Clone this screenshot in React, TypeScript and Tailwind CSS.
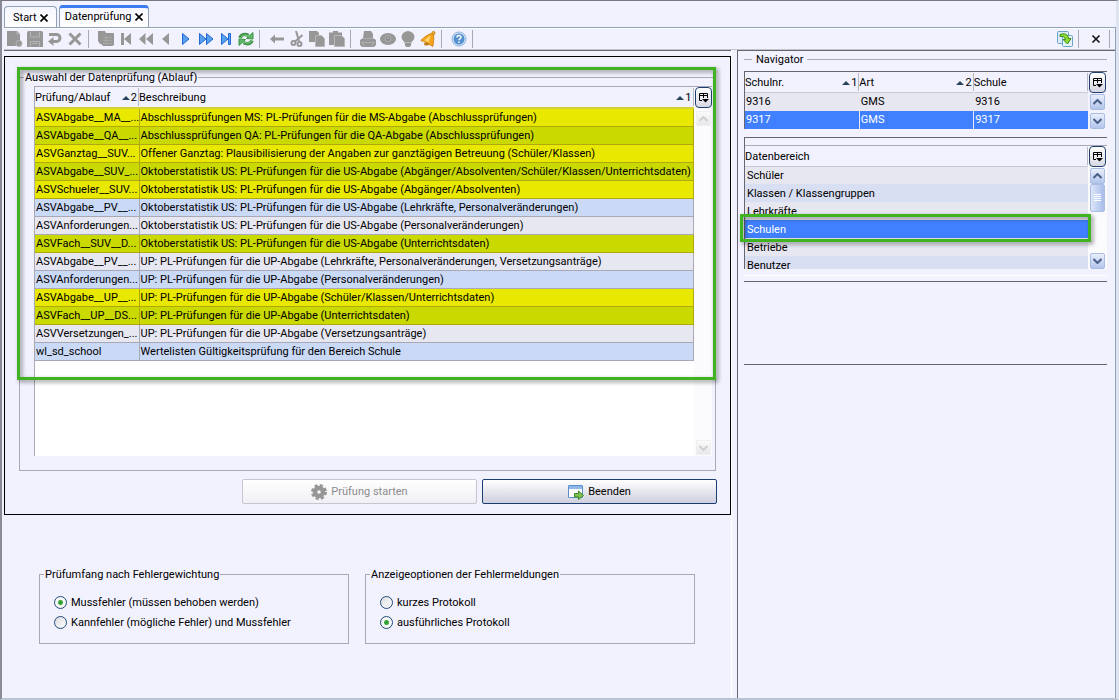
import { useState } from 'react';
import type { ReactNode } from 'react';
import clsx from 'clsx';

type RowTone = 'yellow' | 'olive' | 'light' | 'blue';

interface CheckRow {
  name: string;
  description: string;
  tone: RowTone;
}

const CHECKS: CheckRow[] = [
  { name: 'ASVAbgabe__MA__...', description: 'Abschlussprüfungen MS: PL-Prüfungen für die MS-Abgabe (Abschlussprüfungen)', tone: 'yellow' },
  { name: 'ASVAbgabe__QA__...', description: 'Abschlussprüfungen QA: PL-Prüfungen für die QA-Abgabe (Abschlussprüfungen)', tone: 'olive' },
  { name: 'ASVGanztag__SUV...', description: 'Offener Ganztag: Plausibilisierung der Angaben zur ganztägigen Betreuung (Schüler/Klassen)', tone: 'yellow' },
  { name: 'ASVAbgabe__SUV_...', description: 'Oktoberstatistik US: PL-Prüfungen für die US-Abgabe (Abgänger/Absolventen/Schüler/Klassen/Unterrichtsdaten)', tone: 'olive' },
  { name: 'ASVSchueler__SUV...', description: 'Oktoberstatistik US: PL-Prüfungen für die US-Abgabe (Abgänger/Absolventen)', tone: 'yellow' },
  { name: 'ASVAbgabe__PV__...', description: 'Oktoberstatistik US: PL-Prüfungen für die US-Abgabe (Lehrkräfte, Personalveränderungen)', tone: 'blue' },
  { name: 'ASVAnforderungen...', description: 'Oktoberstatistik US: PL-Prüfungen für die US-Abgabe (Personalveränderungen)', tone: 'light' },
  { name: 'ASVFach__SUV__D...', description: 'Oktoberstatistik US: PL-Prüfungen für die US-Abgabe (Unterrichtsdaten)', tone: 'olive' },
  { name: 'ASVAbgabe__PV__...', description: 'UP: PL-Prüfungen für die UP-Abgabe (Lehrkräfte, Personalveränderungen, Versetzungsanträge)', tone: 'light' },
  { name: 'ASVAnforderungen...', description: 'UP: PL-Prüfungen für die UP-Abgabe (Personalveränderungen)', tone: 'blue' },
  { name: 'ASVAbgabe__UP__...', description: 'UP: PL-Prüfungen für die UP-Abgabe (Schüler/Klassen/Unterrichtsdaten)', tone: 'yellow' },
  { name: 'ASVFach__UP__DS...', description: 'UP: PL-Prüfungen für die UP-Abgabe (Unterrichtsdaten)', tone: 'olive' },
  { name: 'ASVVersetzungen_...', description: 'UP: PL-Prüfungen für die UP-Abgabe (Versetzungsanträge)', tone: 'light' },
  { name: 'wl_sd_school', description: 'Wertelisten Gültigkeitsprüfung für den Bereich Schule', tone: 'blue' },
];

const TONES: Record<RowTone, string> = {
  yellow: 'bg-[#e8e800] border-[#b0a80c]',
  olive: 'bg-[#cad900] border-[#b0a80c]',
  light: 'bg-[#e7e7f1] border-[#a8a8b6]',
  blue: 'bg-[#cad9f6] border-[#a8a8b6]',
};

const SCHOOLS = [
  { number: '9316', kind: 'GMS', school: '9316' },
  { number: '9317', kind: 'GMS', school: '9317' },
];

const AREAS = ['Schüler', 'Klassen / Klassengruppen', 'Lehrkräfte', 'Schulen', 'Betriebe', 'Benutzer'];

function Icon({ children }: { children: ReactNode }) {
  return (
    <svg className="h-4 w-4 shrink-0" viewBox="0 0 16 16" fill="none" aria-hidden="true">
      {children}
    </svg>
  );
}

function ToolButton({ label, disabled, children }: { label: string; disabled?: boolean; children: ReactNode }) {
  return (
    <button type="button" aria-label={label} disabled={disabled} className="flex h-5 w-5 items-center justify-center">
      <Icon>{children}</Icon>
    </button>
  );
}

function Separator() {
  return <span className="ml-[3px] mr-[7px] h-[18px] w-px bg-[#a9a9b4]" />;
}

const GRAY = '#979797';

function Toolbar() {
  return (
    <div role="toolbar" className="flex h-[22px] items-center border-b border-[#c4c4cc] border-t border-t-white pl-px">
      <ToolButton label="Neu" disabled>
        <path d="M0 0h10l3 3v12H0z" fill={GRAY} />
        <path d="M10 0v3h3" stroke="#b8b8b8" />
        <circle cx="12" cy="12.500" r="3" fill={GRAY} stroke="#b5b5b5" />
      </ToolButton>
      <ToolButton label="Speichern" disabled>
        <path d="M0 1.500L1 0h14l1 1.500V16H0z" fill={GRAY} />
        <path d="M3.500.500v5.500h9V.500M3.500 15.500v-5h9v5M5 12.500h6" stroke="#b5b5b5" />
      </ToolButton>
      <ToolButton label="Rückgängig" disabled>
        <path d="M2 3.500h7.500a3.500 3.500 0 0 1 0 7H6" stroke={GRAY} strokeWidth="3" />
        <path d="M6.500 6v9L1 10.500z" fill={GRAY} />
      </ToolButton>
      <ToolButton label="Löschen" disabled>
        <path d="M2.500 2.500l11 11M13.500 2.500l-11 11" stroke={GRAY} strokeWidth="3" />
      </ToolButton>
      <Separator />
      <ToolButton label="Liste" disabled>
        <path d="M0 0h7l1 2h8v12l-2 1H5L3 13H2L0 10z" fill={GRAY} />
        <path d="M5 6.500h9M5 9.500h9M5 12.500h9M8 5v9" stroke="#a8a8a8" />
      </ToolButton>
      <ToolButton label="Erster" disabled>
        <path d="M3 2h3v12H3zM13 2v12L6 8z" fill={GRAY} />
      </ToolButton>
      <ToolButton label="Schnell zurück" disabled>
        <path d="M7.500 2v12L1 8zM15 2v12L8 8z" fill={GRAY} />
      </ToolButton>
      <ToolButton label="Zurück" disabled>
        <path d="M11 2v12L4 8z" fill={GRAY} />
      </ToolButton>
      <ToolButton label="Vor">
        <path d="M4.500 2.500v11L11 8z" fill="#57a0ee" stroke="#2168d4" />
      </ToolButton>
      <ToolButton label="Schnell vor">
        <path d="M1.500 2.500v11L8 8zM8.500 2.500v11L15 8z" fill="#57a0ee" stroke="#2168d4" />
      </ToolButton>
      <ToolButton label="Letzter">
        <path d="M3.500 2.500v11L10 8zM10.500 2.500h2v11h-2z" fill="#57a0ee" stroke="#2168d4" />
      </ToolButton>
      <ToolButton label="Aktualisieren">
        <path d="M2 7C3 3.500 7 2.500 10.500 4.500" stroke="#3f9449" strokeWidth="3.500" />
        <path d="M8.500 7.500L15 8V1.500z" fill="#5bb865" stroke="#3f9449" />
        <path d="M14 9.500c-1 3.500-5 4-8.500 2" stroke="#3f9449" strokeWidth="3.500" />
        <path d="M7.500 8.500L1 8v6.500z" fill="#5bb865" stroke="#3f9449" />
        <path d="M2.500 6.500C4 4 7 3.500 10.500 5M13.500 10c-1.500 2.500-4.500 2.500-8 1" stroke="#83d28a" />
      </ToolButton>
      <Separator />
      <ToolButton label="Pfeil links" disabled>
        <path d="M1 8l5-4.500V6.500h9v3H6v3z" fill={GRAY} />
      </ToolButton>
      <ToolButton label="Ausschneiden" disabled>
        <path d="M7 0l3 10M13.500 4L5.500 11" stroke={GRAY} strokeWidth="2" />
        <circle cx="4.500" cy="12" r="2" stroke={GRAY} strokeWidth="2" />
        <circle cx="10.500" cy="13" r="2" stroke={GRAY} strokeWidth="2" />
      </ToolButton>
      <ToolButton label="Kopieren" disabled>
        <path d="M0 0h8l2 2v9H0z" fill={GRAY} />
        <path d="M6.500 4.500h6l3 3v8h-9z" fill={GRAY} stroke="#b8b8b8" />
      </ToolButton>
      <ToolButton label="Einfügen" disabled>
        <path d="M0 1.500h4V0h5v1.500h4V14H0z" fill={GRAY} />
        <path d="M5.500 4.500h7l3 3v8h-10z" fill={GRAY} stroke="#b8b8b8" />
      </ToolButton>
      <Separator />
      <ToolButton label="Drucken" disabled>
        <path d="M4 0h7l2 3v4l3 2v5l-2 2H2l-2-2V9l3-2z" fill={GRAY} />
        <path d="M3 7.500h10M1 11.500h14M3.500 11v4M12.500 11v4" stroke="#b0b0b0" />
      </ToolButton>
      <ToolButton label="Ansicht" disabled>
        <ellipse cx="8" cy="8" rx="8" ry="6" fill={GRAY} />
        <circle cx="8" cy="7.500" r="3" fill="#8b8b8b" stroke="#b0b0b0" />
        <circle cx="8" cy="7" r="1" fill="#b0b0b0" />
      </ToolButton>
      <ToolButton label="Hinweis" disabled>
        <path d="M8 0a7 6 0 0 1 4 10.500L11 13v2l-2 1H7l-2-1v-2l-1-2.500A7 6 0 0 1 8 0z" fill={GRAY} />
        <path d="M5 11.500h6" stroke="#b8b8b8" />
      </ToolButton>
      <ToolButton label="Meldungen">
        <path d="M12 2.500C8 3 4 6.500 .800 9.500c3 .500 9 4 12 6 .500-4 1.500-8 .700-11.500z" fill="#f5a51d" stroke="#d58310" />
        <path d="M10.500 4.500C8.500 5.500 6 8 4.500 9.500l4 2z" fill="#ffd873" />
        <circle cx="13.500" cy="2" r="1.500" fill="#f3b53b" stroke="#c77f0e" />
        <ellipse cx="6.500" cy="13" rx="2.500" ry="1.500" fill="#c07a13" />
      </ToolButton>
      <Separator />
      <ToolButton label="Hilfe">
        <circle cx="8" cy="8" r="7" fill="#d3e3f4" stroke="#8db4de" />
        <circle cx="8" cy="8" r="5.500" fill="#5590ce" />
        <path d="M6 6.500C6 4 10 4 10 6.300 10 7.800 8 7.700 8 9.300M8 10.500v1.500" stroke="#fff" strokeWidth="1.500" />
      </ToolButton>
      <Separator />
      <div className="ml-auto flex items-center pr-[5px]">
        <ToolButton label="Navigator aktualisieren">
          <rect x=".500" y=".500" width="11" height="12" rx="1" fill="#d9ecf8" stroke="#6aa5c9" />
          <rect x="5.500" y="4.500" width="10" height="11" rx="1" fill="#e6f3fb" stroke="#6aa5c9" />
          <path d="M3 3.500C7 2 11 3 11.500 7.500H14L10.500 13 6 8.500h2.500C8 6 6 5 3 5.500z" fill="#8ddb2e" stroke="#3c8c1c" />
        </ToolButton>
        <Separator />
        <ToolButton label="Navigator schließen">
          <path d="M4.500 4.500l7 7M11.500 4.500l-7 7" stroke="#111" strokeWidth="1.600" />
        </ToolButton>
        <span className="ml-[3px] h-[18px] w-px bg-[#a9a9b4]" />
      </div>
    </div>
  );
}

function Tab({ title, active }: { title: string; active?: boolean }) {
  return (
    <div
      className={clsx(
        'flex items-center gap-[3px] rounded-t-sm border border-b-0 border-[#8fa2b8] bg-linear-to-b from-[#f6f6ff] to-white',
        active ? 'h-[22px] border-t-[3px] border-t-[#3d7bf0] px-[5px] pb-[2px]' : 'h-[21px] px-2 pt-px',
      )}
    >
      <button type="button" role="tab" aria-selected={!!active} className="leading-4">{title}</button>
      <button type="button" aria-label={`${title} schließen`}>
        <svg className="h-2 w-2" viewBox="0 0 8 8" aria-hidden="true">
          <path d="M.500 .500l7 7M7.500 .500l-7 7" stroke="#000" strokeWidth="1.600" />
        </svg>
      </button>
    </div>
  );
}

function HeaderCell({ title, sort, className }: { title: string; sort?: number; className?: string }) {
  return (
    <th scope="col" className={clsx('p-0 font-normal', className)}>
      <div className="my-px flex h-[18px] items-center border-r border-[#b9b9c6] pt-[2px]">
        <span className="flex-1 text-left">{title}</span>
        {sort !== undefined && (
          <>
            <svg className="h-1 w-2" viewBox="0 0 8 4" aria-hidden="true">
              <path d="M4 0l4 4H0z" fill="#27445c" />
            </svg>
            <span className="px-px">{sort}</span>
          </>
        )}
      </div>
    </th>
  );
}

function ColumnControl() {
  return (
    <button
      type="button"
      aria-label="Spalten auswählen"
      className="flex h-[21px] w-[17px] shrink-0 items-center justify-center rounded-sm border border-[#1f3f6e] bg-linear-to-b from-white to-[#d8d8e4]"
    >
      <svg className="h-[11px] w-[11px]" viewBox="0 0 11 11" fill="none" aria-hidden="true">
        <path d="M4 8.500H1.500V1.500h8V6M1 3.500h9M5.500 1v5" stroke="#000" />
        <path d="M4 7h7L7.500 10.500z" fill="#000" />
      </svg>
    </button>
  );
}

function ScrollArrow({ down, disabled }: { down?: boolean; disabled?: boolean }) {
  return (
    <button
      type="button"
      aria-label={down ? 'Nach unten' : 'Nach oben'}
      disabled={disabled}
      className={clsx(
        'flex w-[15px] shrink-0 items-center justify-center border',
        disabled
          ? 'h-[15px] border-[#f0f0f4] bg-linear-to-b from-[#fafafa] to-[#e8e8ea]'
          : 'h-4 rounded-xs border-[#a9bce2] bg-linear-to-b from-[#e9effc] to-[#b3c5ec]',
      )}
    >
      <svg className="h-[6px] w-[9px]" viewBox="0 0 9 6" fill="none" aria-hidden="true">
        <path
          d={down ? 'M.500 1l4 4 4-4' : 'M.500 5l4-4 4 4'}
          stroke={disabled ? '#cfcfcf' : '#4a5f88'}
          strokeWidth="2"
        />
      </svg>
    </button>
  );
}

function RadioOption({ name, label, checked, onSelect }: { name: string; label: string; checked: boolean; onSelect: () => void }) {
  return (
    <label className="flex h-5 items-center gap-1">
      <input
        type="radio"
        name={name}
        checked={checked}
        onChange={onSelect}
        className="h-[13px] w-[13px] appearance-none rounded-full border border-[#23497c] bg-linear-to-br from-[#dcdce0] to-white checked:bg-[radial-gradient(circle,#2f9e2f_0,#3aa63a_2px,#f4f8f4_3px)]"
      />
      <span className="pt-px">{label}</span>
    </label>
  );
}

function RadioGroup({ legend, options, initial, className }: { legend: string; options: string[]; initial: number; className: string }) {
  const [selected, setSelected] = useState(initial);

  return (
    <fieldset className={clsx('border border-[#a8a8b6] pb-[11px] pl-3.5 pt-[11px]', className)}>
      <legend className="-ml-2.5 px-px pt-px leading-[13px]">{legend}</legend>
      {options.map((option, idx) => (
        <RadioOption
          key={option}
          name={legend}
          label={option}
          checked={idx === selected}
          onSelect={() => setSelected(idx)}
        />
      ))}
    </fieldset>
  );
}

function CheckTable() {
  return (
    <div className="flex border-l border-t border-[#a8a8b6]">
      <div className="min-h-[369px] min-w-0 flex-1 bg-white">
        <table className="w-full table-fixed border-collapse">
          <thead>
            <tr className="border-b-2 border-[#d4cf3a] bg-[#f2f2ff]">
              <HeaderCell title="Prüfung/Ablauf" sort={2} className="w-[104px]" />
              <HeaderCell title="Beschreibung" sort={1} />
            </tr>
          </thead>
          <tbody>
            {CHECKS.map((row, idx) => (
              <tr key={idx} className={clsx('h-[18px] border-b', TONES[row.tone])}>
                <td className="whitespace-nowrap border-r border-inherit p-0 pl-px pt-px">{row.name}</td>
                <td className="whitespace-nowrap border-r border-inherit p-0 pl-px pt-px">{row.description}</td>
              </tr>
            ))}
          </tbody>
        </table>
      </div>
      <div className="flex w-[18px] flex-col items-center bg-[#fbfbfd]">
        <ColumnControl />
        <div className="flex flex-1 flex-col justify-between pb-px pt-[3px]">
          <ScrollArrow disabled />
          <ScrollArrow down disabled />
        </div>
      </div>
    </div>
  );
}

function CheckPanel() {
  return (
    <section className="border border-black px-3.5 pb-2.5 pt-[13px]">
      <div className="relative">
        <fieldset className="min-w-0 border border-[#a8a8b6] pb-3.5 pl-3.5 pr-[3px] pt-[2px]">
          <legend className="-ml-2.5 px-px pt-px leading-[13px]">Auswahl der Datenprüfung (Ablauf)</legend>
          <CheckTable />
        </fieldset>
        <div className="pointer-events-none absolute -left-[2px] -top-[3px] right-0 h-[313px] border-[3px] border-[#41b322] drop-shadow-[2px_2px_2px_rgba(0,0,0,0.45)]" />
      </div>
      <div className="-mr-px mt-2 flex justify-end gap-[5px]">
        <button
          type="button"
          disabled
          className="flex h-[25px] w-[235px] items-center justify-center gap-1 rounded-xs border border-[#c6c6d0] bg-linear-to-b from-white to-[#f0f0f5] text-[#8c8c8c]"
        >
          <Icon>
            <circle cx="8" cy="8" r="4" stroke={GRAY} strokeWidth="4.500" />
            <circle cx="8" cy="8" r="6.500" stroke={GRAY} strokeWidth="3" strokeDasharray="3 2.100" />
          </Icon>
          <span className="pt-px">Prüfung starten</span>
        </button>
        <button
          type="button"
          className="flex h-[25px] w-[235px] items-center justify-center gap-1 rounded-xs border border-[#1b3f73] bg-linear-to-b from-white to-[#cfcfdf]"
        >
          <Icon>
            <rect x=".500" y="1.500" width="14" height="12" rx=".500" fill="#fff" stroke="#5b8fcb" />
            <path d="M1 2h13v3H1z" fill="#8db8e8" />
            <path d="M6.500 9.500h4V7l5 4.500-5 4V13h-4z" fill="#7fc052" stroke="#3f8a26" />
          </Icon>
          <span className="pt-px">Beenden</span>
        </button>
      </div>
    </section>
  );
}

function SchoolTable() {
  const [selected, setSelected] = useState('9317');

  return (
    <div className="flex border-l border-t border-[#66666e] bg-[#e7e7f1]">
      <div className="min-w-0 flex-1">
        <table className="w-full table-fixed border-collapse">
          <thead>
            <tr className="border-b border-[#c8c8d2] bg-[#f2f2ff]">
              <HeaderCell title="Schulnr." sort={1} />
              <HeaderCell title="Art" sort={2} />
              <HeaderCell title="Schule" />
            </tr>
          </thead>
          <tbody>
            {SCHOOLS.map((row) => (
              <tr
                key={row.number}
                onClick={() => setSelected(row.number)}
                className={clsx('h-[18px]', row.number === selected ? 'bg-[#4080ff] text-white' : 'bg-[#e7e7f1]')}
              >
                <td className="border-r border-[#e7e7f1] p-0 pl-px pt-px">{row.number}</td>
                <td className="border-r border-[#e7e7f1] p-0 pl-px pt-px">{row.kind}</td>
                <td className="p-0 pl-px pt-px">{row.school}</td>
              </tr>
            ))}
          </tbody>
        </table>
      </div>
      <div className="flex w-[19px] flex-col items-center bg-[#f2f2ff]">
        <ColumnControl />
        <div className="flex flex-1 flex-col justify-between pt-px">
          <ScrollArrow />
          <ScrollArrow down />
        </div>
      </div>
    </div>
  );
}

function AreaTable() {
  const [selected, setSelected] = useState('Schulen');

  return (
    <div className="relative border-l border-t border-[#66666e] pt-[7px]">
      <div className="flex h-[124px] overflow-hidden border-t border-[#a8a8b6]">
        <div className="flex-1">
          <table className="w-full table-fixed border-collapse">
            <thead>
              <tr className="border-b border-[#c8c8d2] bg-[#f2f2ff]">
                <HeaderCell title="Datenbereich" />
              </tr>
            </thead>
            <tbody>
              {AREAS.map((area) => (
                <tr
                  key={area}
                  onClick={() => setSelected(area)}
                  className={clsx(
                    'h-[18px]',
                    area === selected ? 'bg-[#4080ff] text-white' : 'odd:bg-[#e7e7f1] even:bg-[#d9dff2]',
                  )}
                >
                  <td className="p-0 pl-[2px] pt-px">{area}</td>
                </tr>
              ))}
            </tbody>
          </table>
        </div>
        <div className="flex w-[19px] flex-col items-center bg-[#fbfbfd]">
          <ColumnControl />
          <div className="flex flex-1 flex-col pt-px">
            <ScrollArrow />
            <div className="flex h-[28px] w-[15px] flex-col items-center justify-center gap-px rounded-xs border border-[#a9bce2] bg-linear-to-r from-[#dce6fa] to-[#a9bdea]">
              <span className="h-px w-[7px] bg-white" />
              <span className="h-px w-[7px] bg-white" />
              <span className="h-px w-[7px] bg-white" />
              <span className="h-px w-[7px] bg-white" />
            </div>
            <div className="mt-auto flex">
              <ScrollArrow down />
            </div>
          </div>
        </div>
      </div>
      <div className="pointer-events-none absolute -left-[5px] right-4 top-[76px] h-7 border-[3px] border-[#41b322] drop-shadow-[2px_2px_2px_rgba(0,0,0,0.45)]" />
    </div>
  );
}

function Navigator() {
  return (
    <aside className="w-[378px] shrink-0 border-l border-t border-[#66666e] pl-1.5 pr-2">
      <h2 className="flex h-[17px] items-center gap-1">
        <span className="h-px w-2 bg-[#a8a8b6]" />
        Navigator
        <span className="h-px flex-1 bg-[#a8a8b6]" />
      </h2>
      <div className="mt-[3px]">
        <SchoolTable />
      </div>
      <div className="mt-2">
        <AreaTable />
      </div>
      <div className="mt-1.5 h-[7px] border-b border-[#66666e] border-t border-t-white" />
      <div className="h-[83px] border-b border-[#66666e]" />
    </aside>
  );
}

export default function App() {
  return (
    <div className="flex min-h-screen flex-col border-b-2 border-l-2 border-r-[3px] border-t border-b-[#b9c3d3] border-l-[#8a8a96] border-r-[#dfe3f0] border-t-[#77777f] bg-[#f2f2ff] pl-[2px] font-[Roboto,'Open_Sans',sans-serif] text-[11px] leading-4 text-black">
      <div role="tablist" className="flex items-end gap-[2px] border-b border-[#8fa2b8] pt-1">
        <Tab title="Start" />
        <Tab title="Datenprüfung" active />
      </div>
      <div className="flex flex-1 flex-col border-r border-[#8fa2b8]">
        <Toolbar />
        <div className="flex flex-1">
          <main className="min-w-0 flex-1 border-t border-[#66666e] pt-[5px]">
            <CheckPanel />
            <div className="mt-[52px] flex gap-4 pl-[35px]">
              <RadioGroup
                legend="Prüfumfang nach Fehlergewichtung"
                options={['Mussfehler (müssen behoben werden)', 'Kannfehler (mögliche Fehler) und Mussfehler']}
                initial={0}
                className="w-[310px]"
              />
              <RadioGroup
                legend="Anzeigeoptionen der Fehlermeldungen"
                options={['kurzes Protokoll', 'ausführliches Protokoll']}
                initial={1}
                className="w-[330px]"
              />
            </div>
          </main>
          <div className="w-1.5 border-l border-white" />
          <Navigator />
        </div>
      </div>
    </div>
  );
}
